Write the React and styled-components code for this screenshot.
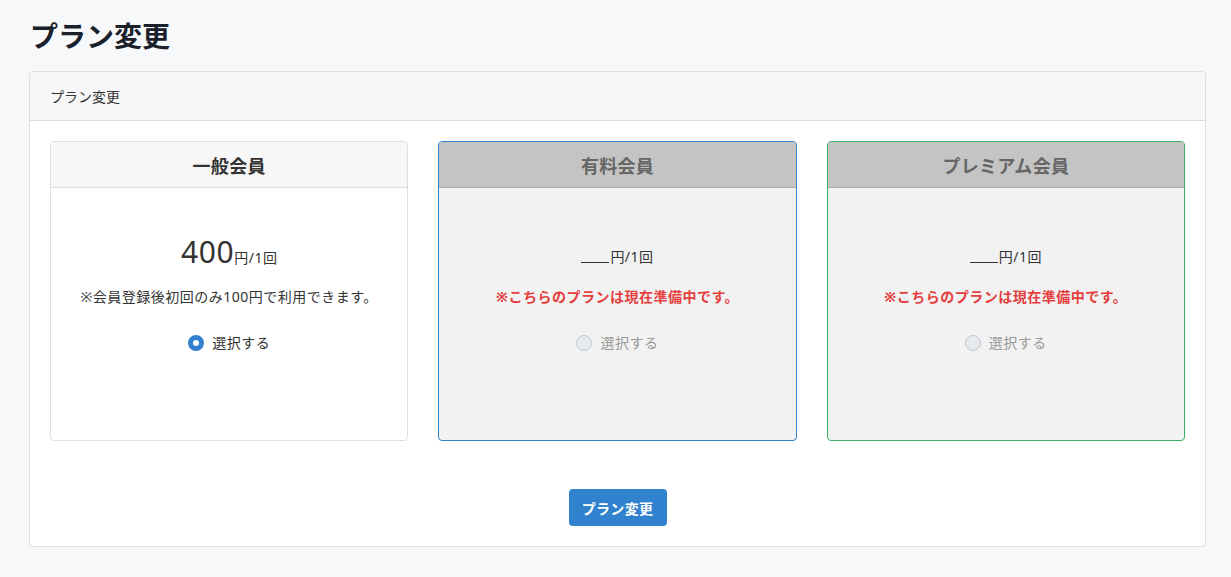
import React from "react";
import styled, { createGlobalStyle } from "styled-components";

const Global = createGlobalStyle`
  html, body { margin: 0; padding: 0; }
  body {
    background: #f7f8fa;
    font-family: "Noto Sans", "Noto Sans CJK JP", sans-serif;
    color: #333;
  }
`;

const Page = styled.div`
  padding: 16px 25px 30px 29px;
`;

const Title = styled.h1`
  margin: 0 0 15px 1px;
  font-size: 28px;
  line-height: 40px;
  font-weight: 700;
  color: #1a202c;
`;

const Panel = styled.section`
  background: #fff;
  border: 1px solid #dddfe2;
  border-radius: 4px;
  overflow: hidden;
`;

const PanelHeader = styled.div`
  height: 48px;
  display: flex;
  align-items: center;
  padding: 0 20px;
  background: #f7f7f7;
  border-bottom: 1px solid #dcdcdc;
  font-size: 14px;
  color: #333;
`;

const PanelBody = styled.div`
  padding: 20px 20px 20px;
  display: flex;
  flex-direction: column;
  align-items: center;
`;

const Plans = styled.div`
  width: 100%;
  display: grid;
  grid-template-columns: repeat(3, 1fr);
  gap: 30px;
`;

const Plan = styled.div`
  height: 300px;
  box-sizing: border-box;
  border: 1px solid ${(p) => p.$border};
  border-radius: 4px;
  overflow: hidden;
  display: flex;
  flex-direction: column;
  background: ${(p) => (p.$disabled ? "#f2f2f2" : "#fff")};
`;

const PlanHeader = styled.div`
  height: 45px;
  flex: none;
  display: flex;
  align-items: center;
  justify-content: center;
  font-size: 18px;
  font-weight: 700;
  letter-spacing: 0.3px;
  color: ${(p) => (p.$disabled ? "#666" : "#333")};
  background: ${(p) => (p.$disabled ? "#c4c4c4" : "#f7f7f7")};
  border-bottom: 1px solid ${(p) => (p.$disabled ? "#a9a9a9" : "#dcdcdc")};
`;

const PlanBody = styled.div`
  flex: 1;
  display: flex;
  flex-direction: column;
  align-items: center;
  padding-top: 49px;
  letter-spacing: 0.5px;
`;

const Price = styled.div`
  height: 40px;
  font-size: 14px;
  line-height: 40px;
  color: #333;
  text-align: center;
  white-space: nowrap;
`;

const Amount = styled.span`
  font-size: 30px;
  line-height: 30px;
  letter-spacing: 0.6px;
`;

const Blank = styled.span`
  display: inline-block;
  width: 28px;
  height: 1.5px;
  background: #333;
  margin-right: 1px;
  vertical-align: -1px;
`;

const Note = styled.p`
  margin: 10px 0 0;
  font-size: 14px;
  line-height: 20px;
  color: ${(p) => (p.$warn ? "#e53e3e" : "#333")};
  font-weight: ${(p) => (p.$warn ? 700 : 400)};
`;

const RadioLabel = styled.label`
  margin-top: 26px;
  display: flex;
  align-items: center;
  gap: 8px;
  font-size: 14px;
  line-height: 20px;
  color: ${(p) => (p.$disabled ? "#999" : "#333")};
`;

const RadioDot = styled.span`
  width: 16px;
  height: 16px;
  box-sizing: border-box;
  border-radius: 50%;
  background: ${(p) => (p.$checked ? "#fff" : "#e6e9ee")};
  border: ${(p) => (p.$checked ? "5px solid #3182ce" : "1px solid #c3c9d1")};
`;

const SubmitButton = styled.button`
  margin-top: 48px;
  width: 98px;
  height: 37px;
  border: none;
  border-radius: 4px;
  background: #3182ce;
  color: #fff;
  font-family: inherit;
  font-size: 14px;
  font-weight: 700;
  letter-spacing: 0.3px;
`;

const plans = [
  { name: "一般会員", border: "#dddfe2", price: "400", note: "※会員登録後初回のみ100円で利用できます。" },
  { name: "有料会員", border: "#3182ce", disabled: true },
  { name: "プレミアム会員", border: "#38b26a", disabled: true },
];

export default function App() {
  return (
    <Page>
      <Global />
      <Title>プラン変更</Title>
      <Panel>
        <PanelHeader>プラン変更</PanelHeader>
        <PanelBody>
          <Plans>
            {plans.map((p) => (
              <Plan key={p.name} $border={p.border} $disabled={p.disabled}>
                <PlanHeader $disabled={p.disabled}>{p.name}</PlanHeader>
                <PlanBody>
                  <Price>
                    {p.disabled ? <Blank /> : <Amount>{p.price}</Amount>}
                    円/1回
                  </Price>
                  {p.disabled ? (
                    <Note $warn>※こちらのプランは現在準備中です。</Note>
                  ) : (
                    <Note>{p.note}</Note>
                  )}
                  <RadioLabel $disabled={p.disabled}>
                    <RadioDot $checked={!p.disabled} />
                    選択する
                  </RadioLabel>
                </PlanBody>
              </Plan>
            ))}
          </Plans>
          <SubmitButton>プラン変更</SubmitButton>
        </PanelBody>
      </Panel>
    </Page>
  );
}
